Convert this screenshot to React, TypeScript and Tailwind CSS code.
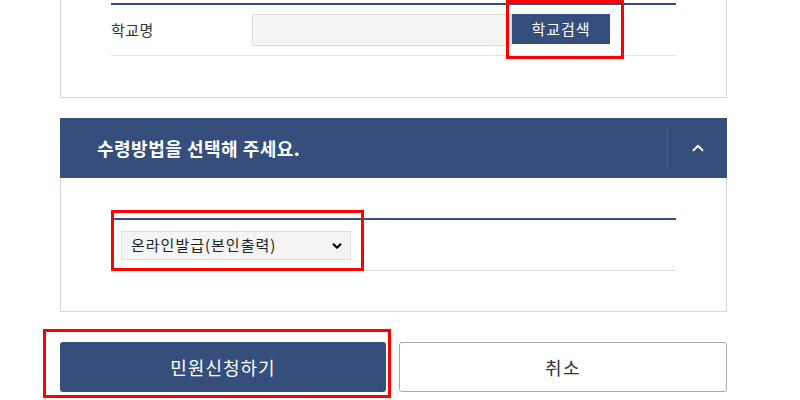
import { ChevronDown, ChevronUp } from 'lucide-react';

const font = { fontFamily: '"Noto Sans CJK KR", "Noto Sans", sans-serif' };

function Highlight({ className }: { className: string }) {
  return <div className={`pointer-events-none absolute border-[3px] border-[#ff0000] ${className}`} />;
}

export default function App() {
  return (
    <div className="relative h-[400px] w-[800px] overflow-hidden bg-white text-[#333]" style={font}>
      <div className="ml-[60px] w-[667px]">
        {/* school section (scrolled) */}
        <div className="border-x border-b border-[#d7d7d7] px-[50px] pt-[3px] pb-[41px]">
          <div className="border-t-2 border-[#354e7b]" />
          <div className="flex h-[51px] items-start border-b border-[#e5e5e5] pt-[9px]">
            <div className="w-[141px] pt-[5px] text-[15px] tracking-[0.5px]">학교명</div>
            <input
              readOnly
              className="h-[32px] w-[260px] border border-[#dcdcdc] bg-[#f4f4f4] outline-none"
            />
            <button className="h-[30px] w-[98px] bg-[#354e7b] text-[15px] tracking-[1px] text-white">학교검색</button>
          </div>
        </div>

        {/* receive method */}
        <div className="mt-[20px]">
          <div className="flex h-[60px] items-center bg-[#354e7b] text-white">
            <div className="flex-1 pl-[37px] text-[18px] font-bold tracking-[0.5px]">수령방법을 선택해 주세요.</div>
            <div className="h-[40px] w-px bg-[#4a6290]" />
            <div className="flex w-[59px] items-center justify-center">
              <ChevronUp size={18} strokeWidth={2.5} />
            </div>
          </div>
          <div className="border-x border-b border-[#d7d7d7] px-[50px] pt-[40px] pb-[40px]">
            <div className="border-t-2 border-[#354e7b]" />
            <div className="h-[51px] border-b border-[#dcdcdc] pt-[11px] pl-[10px]">
              <div className="flex h-[29px] w-[230px] items-center justify-between border border-[#dcdcdc] bg-[#f4f4f4] pr-[6px] pl-[9px] text-[15px] tracking-[1px] text-[#222]">
                <span>온라인발급(본인출력)</span>
                <ChevronDown size={14} strokeWidth={3.5} className="text-black" />
              </div>
            </div>
          </div>
        </div>

        <div className="mt-[30px] flex gap-[13px]">
          <button className="h-[50px] flex-1 rounded-[3px] bg-[#354e7b] text-[18px] tracking-[1px] text-white">민원신청하기</button>
          <button className="h-[50px] flex-1 rounded-[3px] border border-[#aaaaaa] bg-white text-[18px] tracking-[1.5px] text-[#333]">취소</button>
        </div>
      </div>

      <Highlight className="left-[506px] top-[0px] h-[59px] w-[118px]" />
      <Highlight className="left-[111px] top-[210px] h-[61px] w-[253px]" />
      <Highlight className="left-[43px] top-[329px] h-[69px] w-[348px]" />
    </div>
  );
}
